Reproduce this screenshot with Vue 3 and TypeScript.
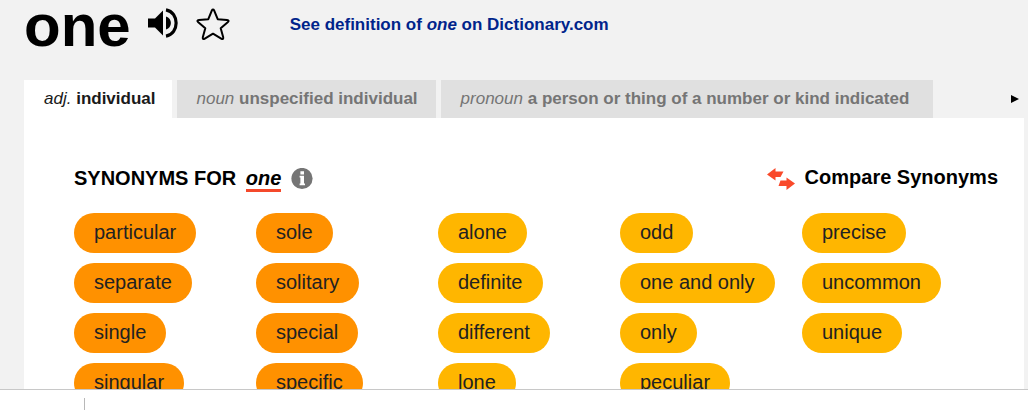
<script setup lang="ts">
import { ref } from 'vue'

interface Tab {
  pos: string
  sense: string
}

interface Column {
  strong: boolean
  words: string[]
}

const tabs: Tab[] = [
  { pos: 'adj.', sense: 'individual' },
  { pos: 'noun', sense: 'unspecified individual' },
  { pos: 'pronoun', sense: 'a person or thing of a number or kind indicated' },
]

const columns: Column[] = [
  { strong: true, words: ['particular', 'separate', 'single', 'singular'] },
  { strong: true, words: ['sole', 'solitary', 'special', 'specific'] },
  { strong: false, words: ['alone', 'definite', 'different', 'lone'] },
  { strong: false, words: ['odd', 'one and only', 'only', 'peculiar'] },
  { strong: false, words: ['precise', 'uncommon', 'unique'] },
]

const active = ref(0)
</script>

<template>
  <div class="page">
    <main class="content">
      <header class="head">
        <h1>one</h1>
        <button type="button" class="icon sound" aria-label="Listen">
          <svg width="30" height="30" viewBox="0 0 30 30">
            <path d="M0 10.500h7l8-8v25l-8-8H0z" />
            <path d="M18 8.500c6.500 2 6.500 11 0 13z" />
            <path d="M18 1.800c13.500 2.400 13.500 24 0 26.400" fill="none" stroke="#000" stroke-width="3.200" />
          </svg>
        </button>
        <button type="button" class="icon star" aria-label="Save word">
          <svg width="34" height="34" viewBox="0 0 34 34">
            <path
              d="M15.800 2.600Q17 .6 18.200 2.600L21.700 11.200 31 11.900Q33.800 12.300 31.700 14.200L24.700 20.200 27.200 29.200Q27.600 32 25.200 30.600L17 25.700 8.800 30.600Q6.400 32 6.800 29.200L9.300 20.200 2.300 14.200Q.2 12.300 3 11.900L12.300 11.200Z"
              fill="none"
              stroke="#000"
              stroke-width="2"
              stroke-linejoin="round"
            />
          </svg>
        </button>
        <a class="definition" href="#definition">See definition of <em>one</em> on Dictionary.com</a>
      </header>

      <nav class="tabs" role="tablist" aria-label="Senses">
        <button
          v-for="(tab, i) in tabs"
          :key="tab.sense"
          type="button"
          role="tab"
          class="tab"
          :class="{ active: i === active }"
          :aria-selected="i === active"
          @click="active = i"
        >
          <em>{{ tab.pos }}</em> <strong>{{ tab.sense }}</strong>
        </button>
        <button type="button" class="next" aria-label="Next senses">
          <svg width="8" height="8" viewBox="0 0 8 8"><path d="M0 0v8l8-4z" /></svg>
        </button>
      </nav>

      <section class="panel">
        <div class="bar">
          <h2>SYNONYMS FOR <em>one</em></h2>
          <button type="button" class="icon info" aria-label="About synonyms">
            <svg width="22" height="22" viewBox="0 0 22 22">
              <circle cx="11" cy="10.500" r="10.600" fill="#757575" />
              <path d="M9.400 3.200h3.600v3.200H9.400zM8.600 7.700h4.400v7.700h1v1.900H8.600v-1.900h.8V9.500h-.8z" fill="#fff" />
            </svg>
          </button>
          <button type="button" class="compare">
            <svg width="28" height="22" viewBox="0 0 28 22">
              <path d="M0 6.500 8.500 0v3.500h8l-3 5.500h-5v3.500z" />
              <path d="M28 15.500 19.500 9.500v3h-6L11.500 18h8v4z" />
            </svg>
            <span>Compare Synonyms</span>
          </button>
        </div>

        <div class="columns">
          <ul v-for="(column, c) in columns" :key="c" :class="{ strong: column.strong }">
            <li v-for="word in column.words" :key="word">
              <a class="pill" :href="'#' + word">{{ word }}</a>
            </li>
          </ul>
        </div>
      </section>
    </main>
    <footer class="tray"><span class="divider"></span></footer>
  </div>
</template>

<style>
body {
  margin: 0;
}
</style>

<style scoped>
.page {
  display: flex;
  flex-direction: column;
  height: 100vh;
  background: #f2f2f2;
  color: #000;
  font-family: 'Liberation Sans', Arial, sans-serif;
}

button {
  border: 0;
  padding: 0;
  background: none;
  color: inherit;
  font: inherit;
  cursor: pointer;
}

svg {
  display: block;
}

.content {
  display: flex;
  flex: 1;
  flex-direction: column;
  min-height: 0;
  overflow: hidden;
  padding: 0 4px 0 24px;
}

.head {
  display: flex;
  flex: none;
  align-items: flex-start;
  height: 80px;
}

h1 {
  margin: 0;
  font-size: 60px;
  line-height: 52px;
}

.icon {
  flex: none;
}

.sound {
  margin: 8px 0 0 17px;
}

.star {
  margin: 8px 0 0 18px;
}

.definition {
  margin: 15px 0 0 60px;
  color: #00248b;
  font-size: 17px;
  font-weight: 700;
  line-height: 20px;
  text-decoration: none;
}

.tabs {
  display: flex;
  flex: none;
  gap: 5px;
  height: 38px;
}

.tab {
  padding: 0 18px 0 20px;
  background: #e0e0e0;
  color: #757575;
  font-size: 17px;
  white-space: nowrap;
}

.tab:nth-child(3) {
  padding-right: 24px;
}

.tab.active {
  padding-right: 16px;
  background: #fff;
  color: #1a1a1a;
}

.next {
  margin-left: auto;
  padding: 0 5px;
}

.panel {
  flex: 1 0 auto;
  padding: 50px 26px 0 50px;
  background: #fff;
}

.bar {
  display: flex;
  align-items: flex-start;
  height: 22px;
  margin-bottom: 23px;
}

h2 {
  margin: 0;
  font-size: 20px;
  line-height: 20px;
}

h2 em {
  display: inline-block;
  margin-left: 4px;
  border-bottom: 3px solid #f4492b;
  line-height: 21px;
}

.info {
  margin-left: 10px;
}

.compare {
  display: flex;
  gap: 10px;
  margin-left: auto;
  font-size: 20px;
  font-weight: 700;
  line-height: 18px;
}

.compare svg {
  fill: #f9492a;
}

.columns {
  display: grid;
  grid-template-columns: repeat(5, 1fr);
  padding-right: 14px;
}

ul {
  display: flex;
  flex-direction: column;
  gap: 10px;
  margin: 0;
  padding: 0;
  list-style: none;
}

li {
  display: flex;
}

.pill {
  padding: 0 20px 2px;
  border-radius: 20px;
  background: #ffb600;
  color: #222;
  font-size: 20px;
  line-height: 38px;
  text-decoration: none;
  white-space: nowrap;
}

.strong .pill {
  background: #ff9100;
}

.tray {
  display: flex;
  flex: none;
  align-items: flex-end;
  height: 20px;
  padding-left: 84px;
  border-top: 1px solid #c8c8c8;
  background: #fff;
}

.divider {
  width: 1px;
  height: 12px;
  background: #b8b8b8;
}
</style>
